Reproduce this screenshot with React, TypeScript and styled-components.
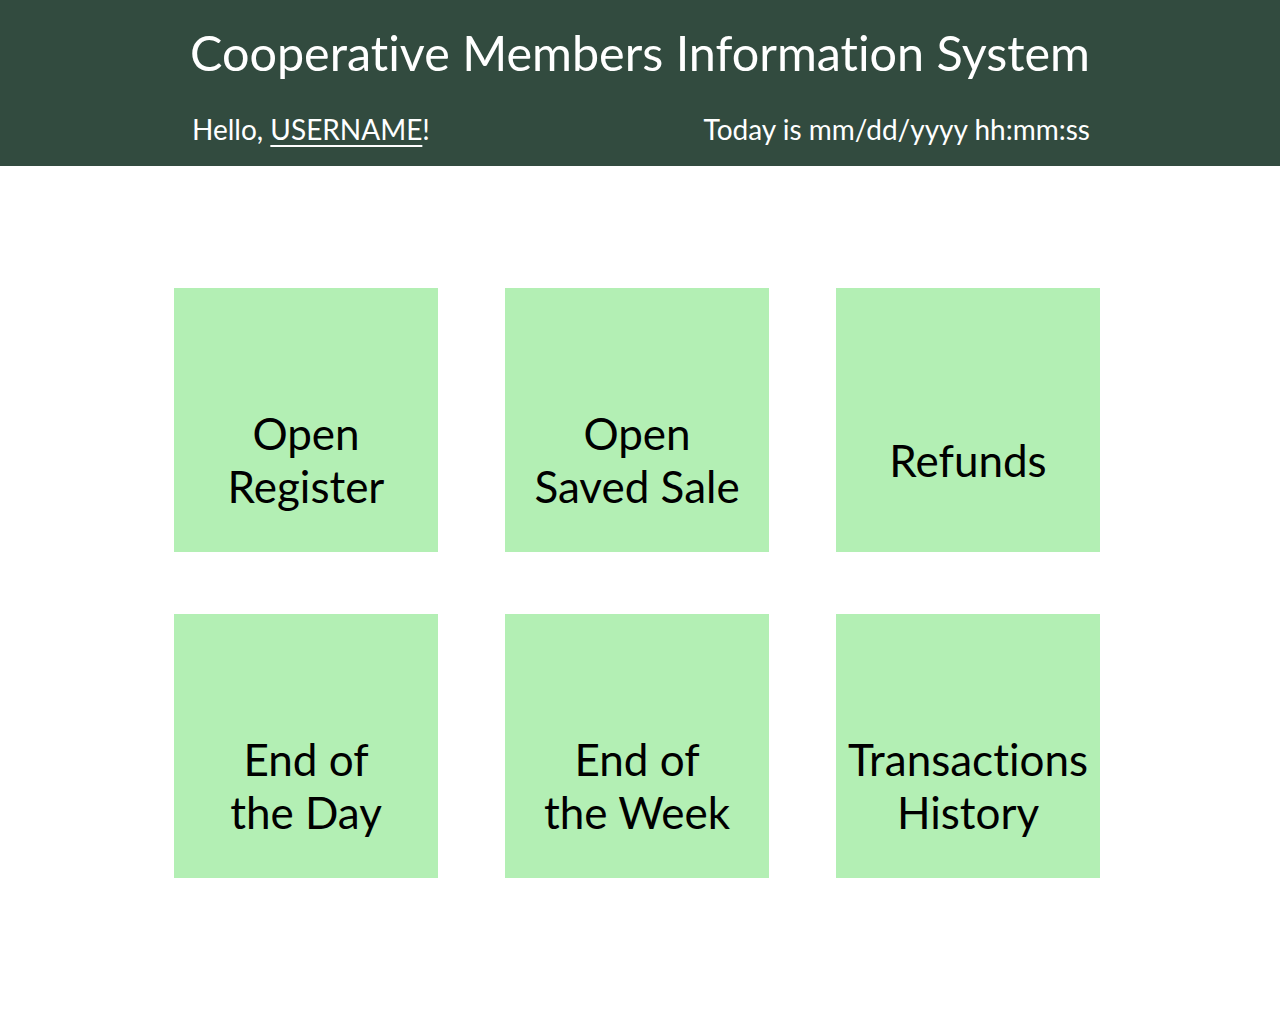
import React from "react";
import styled, { createGlobalStyle } from "styled-components";

const Global = createGlobalStyle`
  html, body { margin: 0; padding: 0; background: #ffffff; }
  body {
    font-family: Lato, "Open Sans", sans-serif;
    font-variant-ligatures: none;
  }
`;

const Header = styled.header`
  background: #324b3f;
  height: 166px;
  box-sizing: border-box;
  padding-top: 22px;
  color: #ffffff;
`;

const HeaderInner = styled.div`
  width: 900px;
  margin: 0 auto;
`;

const Title = styled.h1`
  margin: 0;
  font-weight: 400;
  font-size: 48.5px;
  line-height: 60px;
  text-align: center;
  white-space: nowrap;
`;

const SubRow = styled.div`
  display: flex;
  justify-content: space-between;
  align-items: baseline;
  margin-top: 29px;
  padding-left: 2px;
  font-size: 28px;
  line-height: 36px;
  white-space: nowrap;
`;

const UserLink = styled.span`
  text-decoration: underline;
  text-decoration-thickness: 2px;
  text-underline-offset: 5px;
`;

const Main = styled.main`
  display: grid;
  grid-template-columns: repeat(3, 264px);
  column-gap: 67px;
  row-gap: 62px;
  justify-content: center;
  padding-top: 122px;
  padding-right: 6px;
`;

const Tile = styled.button`
  width: 264px;
  height: 264px;
  border: none;
  margin: 0;
  background: #b3efb4;
  box-sizing: border-box;
  padding: 80px 6px 0;
  display: flex;
  align-items: center;
  justify-content: center;
  font-family: Lato, "Open Sans", sans-serif;
  font-variant-ligatures: none;
  font-size: 44px;
  line-height: 53px;
  color: #000000;
  text-align: center;
  cursor: pointer;
`;

const tiles = [
  ["Open", "Register"],
  ["Open", "Saved Sale"],
  ["Refunds"],
  ["End of", "the Day"],
  ["End of", "the Week"],
  ["Transactions", "History"],
];

export default function App() {
  return (
    <>
      <Global />
      <Header>
        <HeaderInner>
          <Title>Cooperative Members Information System</Title>
          <SubRow>
            <span>
              Hello, <UserLink>USERNAME</UserLink>!
            </span>
            <span>Today is mm/dd/yyyy hh:mm:ss</span>
          </SubRow>
        </HeaderInner>
      </Header>
      <Main>
        {tiles.map((lines, i) => (
          <Tile key={i}>
            <span>
              {lines.map((l, j) => (
                <React.Fragment key={j}>
                  {j > 0 && <br />}
                  {l}
                </React.Fragment>
              ))}
            </span>
          </Tile>
        ))}
      </Main>
    </>
  );
}
